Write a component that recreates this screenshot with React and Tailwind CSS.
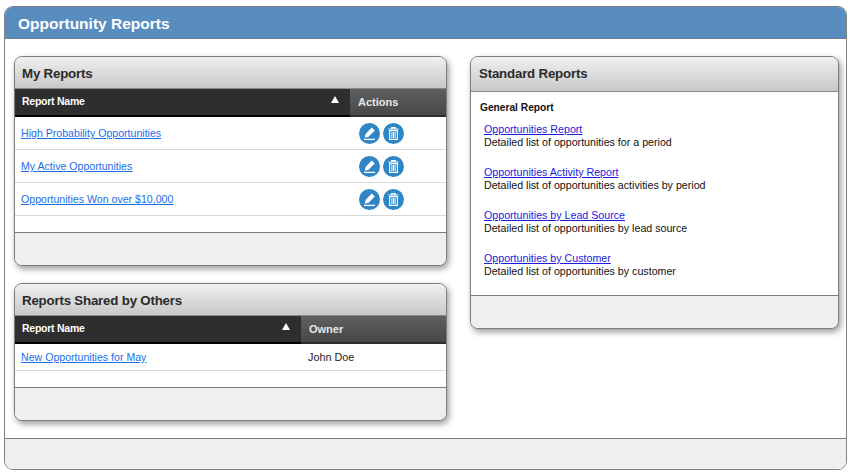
import React from "react";

function EditIcon() {
  return (
    <svg width="21" height="21" viewBox="0 0 21 21">
      <circle cx="10.5" cy="10.5" r="10.5" fill="#2f86c5" />
      <path d="M12.8 4.6l3 3-6.2 6.2-3.9 1 1-4z" fill="#fff" />
      <path d="M5 16.4h11" stroke="#fff" strokeWidth="1.3" />
    </svg>
  );
}

function TrashIcon() {
  return (
    <svg width="21" height="21" viewBox="0 0 21 21">
      <circle cx="10.5" cy="10.5" r="10.5" fill="#2f86c5" />
      <path d="M5.5 6h10M8.7 6V4.6h3.6V6" stroke="#fff" strokeWidth="1.1" fill="none" />
      <path d="M6.6 7.6h7.8v8.8H6.6z" stroke="#fff" strokeWidth="1.1" fill="none" />
      <path d="M8.9 9v6M10.5 9v6M12.1 9v6" stroke="#fff" strokeWidth="1" />
    </svg>
  );
}

function PanelHeader({ title, className }) {
  return (
    <div className={`flex items-center ${className} bg-gradient-to-b from-[#f0f0f0] to-[#c8c8c8] border-b border-[#8a8a8a] rounded-t-[7px] text-[13.3px] tracking-[-0.2px] font-bold text-[#2b2b2b]`}>
      {title}
    </div>
  );
}

function TableHead({ second, secondWidth }) {
  return (
    <div className="flex h-[28px] font-bold text-white">
      <div className="relative flex-1 flex items-center px-[7px] bg-[#2e2e2e] border-b-2 border-black text-[10.5px] tracking-[-0.25px]">
        Report Name
        <span className="absolute right-[11px] top-[7px] w-0 h-0 border-x-[4px] border-x-transparent border-b-[7px] border-b-white" />
      </div>
      <div className={`${secondWidth} flex items-center px-[8px] bg-gradient-to-b from-[#606060] to-[#474747] border-b-2 border-[#2e2e2e] text-[11px] text-[#e8e8e8]`}>
        {second}
      </div>
    </div>
  );
}

function ReportLink({ children }) {
  return (
    <a href="#" className="text-[10.6px] text-[#1a6ee8] underline">
      {children}
    </a>
  );
}

function ActionRow({ name }) {
  return (
    <div className="flex items-center h-[33px] border-b border-[#d8d8d8]">
      <div className="flex-1 pl-[6px] pb-[2px]">
        <ReportLink>{name}</ReportLink>
      </div>
      <div className="w-[96px] flex items-center gap-[3px] pl-[9px]">
        <EditIcon />
        <TrashIcon />
      </div>
    </div>
  );
}

function PanelFooter() {
  return <div className="h-[33px] bg-[#efefef] border-t border-[#7c7c7c] rounded-b-[7px]" />;
}

function Panel({ className, children }) {
  return (
    <div className={`bg-white border border-[#7c7c7c] rounded-[8px] shadow-[2px_3px_6px_rgba(0,0,0,0.4)] ${className}`}>
      {children}
    </div>
  );
}

const standardReports = [
  ["Opportunities Report", "Detailed list of opportunities for a period"],
  ["Opportunities Activity Report", "Detailed list of opportunities activities by period"],
  ["Opportunities by Lead Source", "Detailed list of opportunities by lead source"],
  ["Opportunities by Customer", "Detailed list of opportunities by customer"],
];

export default function App() {
  return (
    <div className="w-[850px] h-[475px] bg-white pt-[6px] pl-[4px] overflow-hidden font-['Liberation_Sans',Arial,sans-serif]">
      <div className="w-[843px] h-[464px] flex flex-col border border-[#808080] rounded-[9px]">
        <div className="h-[32px] flex items-center pt-[2px] pl-[13px] bg-[#5a8dbf] border-b border-[#6f7f8f] rounded-t-[8px] text-[15.5px] font-bold text-white">
          Opportunity Reports
        </div>

        <div className="flex-1 flex items-start gap-[23px] pt-[17px] pl-[9px]">
          <div className="w-[433px] flex flex-col gap-[17px]">
            <Panel className="h-[210px] flex flex-col">
              <PanelHeader title="My Reports" className="h-[32px] pt-[2px] px-[7px]" />
              <TableHead second="Actions" secondWidth="w-[96px]" />
              <ActionRow name="High Probability Opportunities" />
              <ActionRow name="My Active Opportunities" />
              <ActionRow name="Opportunities Won over $10,000" />
              <div className="flex-1" />
              <PanelFooter />
            </Panel>

            <Panel className="h-[138px] flex flex-col">
              <PanelHeader title="Reports Shared by Others" className="h-[32px] pt-[2px] px-[7px]" />
              <TableHead second="Owner" secondWidth="w-[145px]" />
              <div className="flex items-center h-[27px] border-b border-[#d8d8d8]">
                <div className="flex-1 pl-[6px] pb-[2px]">
                  <ReportLink>New Opportunities for May</ReportLink>
                </div>
                <div className="w-[145px] pl-[7px] text-[10.8px] text-[#222]">John Doe</div>
              </div>
              <div className="flex-1" />
              <PanelFooter />
            </Panel>
          </div>

          <Panel className="w-[369px] h-[273px] flex flex-col">
            <PanelHeader title="Standard Reports" className="h-[35px] px-[8px]" />
            <div className="flex-1 pl-[9px] pt-[9px] text-[10.67px] text-[#111]">
              <div className="font-bold text-[10.2px] leading-[13px] mb-[9px]">General Report</div>
              <div className="flex flex-col gap-[17px] pl-[4px]">
                {standardReports.map(([name, description]) => (
                  <div key={name} className="leading-[13px]">
                    <a href="#" className="block text-[#1a1ae0] underline">
                      {name}
                    </a>
                    <div>{description}</div>
                  </div>
                ))}
              </div>
            </div>
            <PanelFooter />
          </Panel>
        </div>

        <div className="h-[31px] bg-[#efefef] border-t border-[#7c7c7c] rounded-b-[8px]" />
      </div>
    </div>
  );
}
